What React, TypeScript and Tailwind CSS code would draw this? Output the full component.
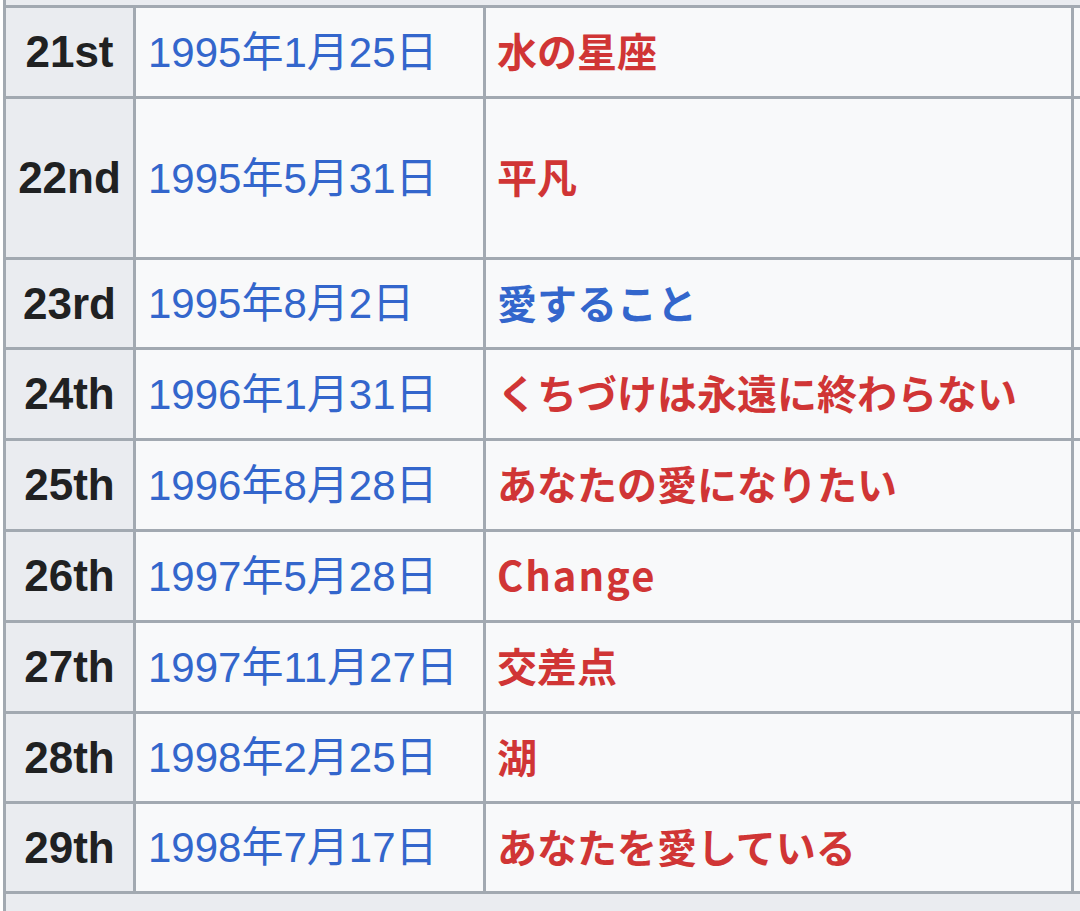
import React from "react";

type Release = {
  no: string;
  date: string;
  title: string;
  hasArticle?: boolean;
};

const releases: Release[] = [
  { no: "21st", date: "1995年1月25日", title: "水の星座" },
  { no: "22nd", date: "1995年5月31日", title: "平凡" },
  { no: "23rd", date: "1995年8月2日", title: "愛すること", hasArticle: true },
  { no: "24th", date: "1996年1月31日", title: "くちづけは永遠に終わらない" },
  { no: "25th", date: "1996年8月28日", title: "あなたの愛になりたい" },
  { no: "26th", date: "1997年5月28日", title: "Change" },
  { no: "27th", date: "1997年11月27日", title: "交差点" },
  { no: "28th", date: "1998年2月25日", title: "湖" },
  { no: "29th", date: "1998年7月17日", title: "あなたを愛している" },
];

// row 22nd is taller than the rest in the screenshot
const rowHeights = ["h-[88px]", "h-[158px]", "h-[87px]", "h-[88px]", "h-[88px]", "h-[88px]", "h-[88px]", "h-[87px]", "h-[87px]"];

export default function App() {
  return (
    <div className="w-[1080px] h-[911px] overflow-hidden bg-white">
      <div className="ml-[3px] w-[1100px] bg-[#a2a9b1] pl-[3px] grid grid-cols-[127px_347px_585px_1fr] gap-[3px]">
        {/* tail of the previous row */}
        <div className="col-span-4 h-[5px] bg-[#eaecf0]" />

        {releases.map((r, i) => (
          <React.Fragment key={r.no}>
            <div
              className={`${rowHeights[i]} bg-[#eaecf0] flex items-center justify-center text-[44px] font-bold text-[#202122] font-['Liberation_Sans',Arial,sans-serif]`}
            >
              {r.no}
            </div>
            <div
              className={`${rowHeights[i]} bg-[#f8f9fa] flex items-center pl-[12px] text-[42px] text-[#3366cc] font-['Liberation_Sans','Noto_Sans_CJK_JP',sans-serif]`}
            >
              {r.date}
            </div>
            <div
              className={`${rowHeights[i]} bg-[#f8f9fa] flex items-center pl-[11px] pb-[4px] text-[40px] font-semibold font-['Noto_Sans_CJK_JP',sans-serif] ${
                r.hasArticle ? "text-[#3366cc]" : "text-[#d03535]"
              } ${r.title === "Change" ? "tracking-[2px]" : ""}`}
            >
              {r.title}
            </div>
            <div className={`${rowHeights[i]} bg-[#f8f9fa]`} />
          </React.Fragment>
        ))}

        {/* start of the next row */}
        <div className="col-span-4 h-[40px] bg-[#eaecf0]" />
      </div>
    </div>
  );
}
